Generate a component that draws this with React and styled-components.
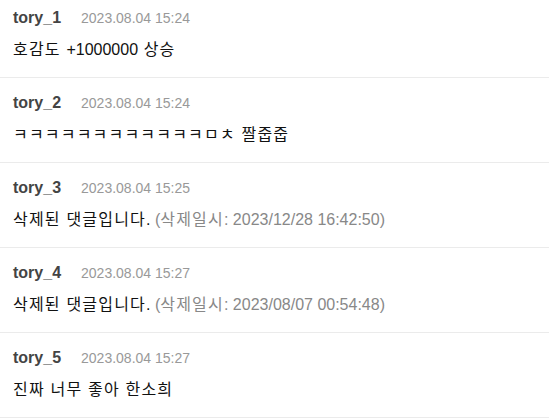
import React from 'react';
import styled, { createGlobalStyle } from 'styled-components';

const GlobalStyle = createGlobalStyle`
  body {
    margin: 0;
    background: #fff;
    font-family: 'Liberation Sans', Arial, 'Noto Sans CJK KR', sans-serif;
  }
`;

const List = styled.ul`
  list-style: none;
  margin: 0;
  padding: 0;
`;

const Item = styled.li`
  padding: 16px 13px 15px;
  border-bottom: 1px solid #ebebeb;

  &:first-child {
    padding-top: 9px;
  }
`;

const Meta = styled.div`
  display: flex;
  align-items: baseline;
  gap: 20px;
  line-height: 17px;
`;

const Name = styled.span`
  font-size: 16px;
  font-weight: bold;
  color: #444;
`;

const Date = styled.span`
  font-size: 14px;
  color: #999;
`;

const Content = styled.p`
  margin: 11px 0 0;
  font-size: 16px;
  line-height: 24px;
  color: #111;
`;

const Deleted = styled.span`
  color: #888;
`;

// hangul renders a bit wider in the original font
const Syl = styled.span`
  letter-spacing: 1.2px;
`;

const hangul = (text) =>
  text.split(/([ㄱ-ㆎ가-힣 ]+)/).map((part, i) =>
    /[ㄱ-ㆎ가-힣]/.test(part) ? <Syl key={i}>{part}</Syl> : part
  );

const comments = [
  { name: 'tory_1', date: '2023.08.04 15:24', text: '호감도 +1000000 상승' },
  { name: 'tory_2', date: '2023.08.04 15:24', text: 'ㅋㅋㅋㅋㅋㅋㅋㅋㅋㅋㅋㅋㅁㅊ 짤줍줍' },
  { name: 'tory_3', date: '2023.08.04 15:25', deletedAt: '2023/12/28 16:42:50' },
  { name: 'tory_4', date: '2023.08.04 15:27', deletedAt: '2023/08/07 00:54:48' },
  { name: 'tory_5', date: '2023.08.04 15:27', text: '진짜 너무 좋아 한소희' },
];

const App = () => {
  return (
    <>
      <GlobalStyle />
      <List>
        {comments.map((c) => (
          <Item key={c.name}>
            <Meta>
              <Name>{c.name}</Name>
              <Date>{c.date}</Date>
            </Meta>
            <Content>
              {c.deletedAt ? (
                <>
                  {hangul('삭제된 댓글입니다. ')}
                  <Deleted>{hangul(`(삭제일시: ${c.deletedAt})`)}</Deleted>
                </>
              ) : (
                hangul(c.text)
              )}
            </Content>
          </Item>
        ))}
      </List>
    </>
  );
};

export default App;
